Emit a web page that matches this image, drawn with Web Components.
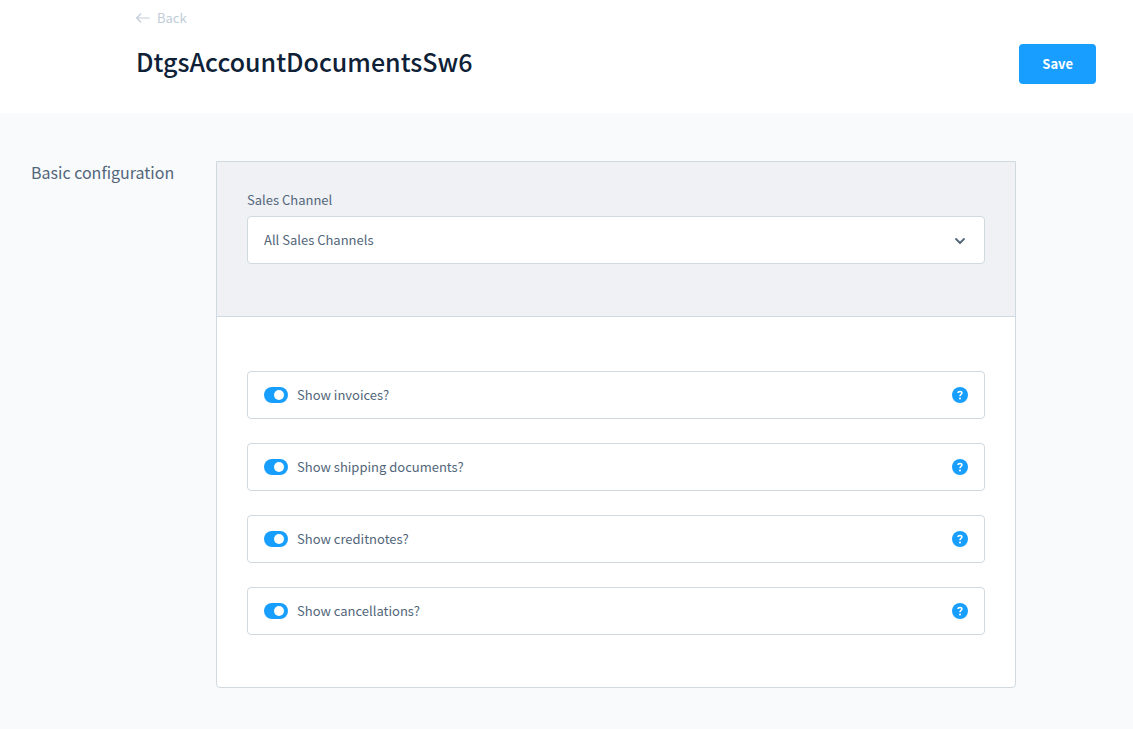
<!DOCTYPE html>
<html lang="en">
<head>
<meta charset="utf-8">
<meta name="viewport" content="width=device-width, initial-scale=1">
<title>DtgsAccountDocumentsSw6</title>
<style>
  html { height: 100%; }
  body {
    margin: 0;
    min-height: 100%;
    background: #f9fafc;
    color: #52667a;
    font-family: "Source Sans Pro", "Noto Sans CJK SC", "Noto Sans", sans-serif;
    font-size: 13px;
    line-height: 20px;
    --accent: #189eff;
    --line: #d1d9e0;
    --title: #0e2137;
    --muted: #c1ccd8;
  }
</style>
</head>
<body>
<config-page></config-page>

<script>
class BaseElement extends HTMLElement {
  constructor() {
    super();
    this.attachShadow({ mode: "open" });
  }
  connectedCallback() {
    if (!this.shadowRoot.firstChild) this.shadowRoot.innerHTML = this.render();
  }
}

class BackLink extends BaseElement {
  render() {
    return `
      <style>
        :host { display: block; }
        a { display: inline-flex; align-items: center; gap: 7px; color: var(--muted); text-decoration: none; }
        svg { display: block; }
      </style>
      <a href="#back">
        <svg width="14" height="12" viewBox="0 0 14 12" fill="none" stroke="currentColor" stroke-width="1.2" stroke-linecap="round" stroke-linejoin="round" aria-hidden="true"><path d="M13.300 6H.7M4.700 2 .7 6l4 4"/></svg>
        <slot></slot>
      </a>`;
  }
}

class PrimaryButton extends BaseElement {
  render() {
    return `
      <style>
        :host { display: block; }
        button {
          display: block; height: 40px; padding: 0 23px; border: 0; border-radius: 4px;
          background: var(--accent); color: #fff; font: inherit; font-weight: 700; cursor: pointer;
        }
      </style>
      <button type="button"><slot></slot></button>`;
  }
}

class PageHeader extends BaseElement {
  render() {
    return `
      <style>
        :host { display: block; background: #fff; }
        header { display: flex; justify-content: space-between; padding: 8px 37px 29px 136px; }
        h1 { margin: 16px 0 0; color: var(--title); font-size: 25px; line-height: 32px; font-weight: 500; }
        .actions { padding-top: 36px; }
      </style>
      <header>
        <div>
          <slot name="back"></slot>
          <h1><slot></slot></h1>
        </div>
        <div class="actions"><slot name="actions"></slot></div>
      </header>`;
  }
}

class SelectField extends BaseElement {
  render() {
    return `
      <style>
        :host { display: block; }
        label { display: block; margin-bottom: 6px; }
        .box { display: grid; align-items: center; }
        .box > * { grid-area: 1 / 1; }
        select {
          appearance: none; width: 100%; height: 48px; margin: 0; padding: 0 40px 0 16px;
          border: 1px solid var(--line); border-radius: 4px; background: #fff; color: inherit; font: inherit;
        }
        svg { justify-self: end; margin-right: 19px; pointer-events: none; }
      </style>
      <label for="field">${this.getAttribute("label")}</label>
      <div class="box">
        <select id="field"><option>${this.getAttribute("value")}</option></select>
        <svg width="12" height="12" viewBox="0 0 12 12" fill="none" stroke="currentColor" stroke-width="1.8" stroke-linecap="round" stroke-linejoin="round" aria-hidden="true"><path d="m2 5 4 4 4-4"/></svg>
      </div>`;
  }
}

class SwitchField extends BaseElement {
  render() {
    return `
      <style>
        :host {
          display: flex; align-items: center; box-sizing: border-box; height: 48px; padding: 0 16px;
          border: 1px solid var(--line); border-radius: 4px; background: #fff;
        }
        input {
          appearance: none; display: flex; align-items: center; box-sizing: border-box; flex: none;
          width: 24px; height: 16px; margin: 0 9px 0 0; padding: 0 4px; border-radius: 8px; background: var(--line);
        }
        input::before { content: ""; width: 10px; height: 10px; border-radius: 50%; background: #fff; }
        input:checked { justify-content: flex-end; background: var(--accent); }
        label { flex: 1; }
        button { display: block; padding: 0; border: 0; background: none; }
        svg { display: block; }
      </style>
      <input id="toggle" type="checkbox" role="switch" checked>
      <label for="toggle"><slot></slot></label>
      <button type="button" aria-label="Help">
        <svg width="16" height="16" viewBox="0 0 16 16" fill="none" aria-hidden="true">
          <circle cx="8" cy="8" r="8" fill="#189eff"/>
          <path d="M6.100 6C6.100 4.900 7 4.500 8 4.500s1.900.5 1.900 1.500C9.900 7.200 8 7.400 8 9.200" stroke="#fff" stroke-width="1.6"/>
          <circle cx="8" cy="11.400" r="1" fill="#fff"/>
        </svg>
      </button>`;
  }
}

class ConfigCard extends BaseElement {
  render() {
    return `
      <style>
        :host { display: block; border: 1px solid var(--line); border-radius: 0 0 4px 4px; background: #fff; }
        .top { padding: 28px 30px 52px; border-bottom: 1px solid var(--line); background: #f0f1f5; }
        .fields { display: grid; gap: 24px; padding: 54px 30px 52px; }
      </style>
      <div class="top"><slot name="top"></slot></div>
      <div class="fields"><slot></slot></div>`;
  }
}

class ConfigPage extends BaseElement {
  render() {
    return `
      <style>
        :host { display: block; }
        main {
          display: grid; grid-template-columns: 145px minmax(0, 800px); column-gap: 40px;
          align-items: start; padding: 48px 31px 41px;
        }
        h2 { margin: 0; font-size: 16px; line-height: 22px; font-weight: 400; white-space: nowrap; }
      </style>
      <page-header>
        <back-link slot="back">Back</back-link>
        DtgsAccountDocumentsSw6
        <primary-button slot="actions">Save</primary-button>
      </page-header>
      <main>
        <h2>Basic configuration</h2>
        <config-card>
          <select-field slot="top" label="Sales Channel" value="All Sales Channels"></select-field>
          <switch-field>Show invoices?</switch-field>
          <switch-field>Show shipping documents?</switch-field>
          <switch-field>Show creditnotes?</switch-field>
          <switch-field>Show cancellations?</switch-field>
        </config-card>
      </main>`;
  }
}

customElements.define("back-link", BackLink);
customElements.define("primary-button", PrimaryButton);
customElements.define("page-header", PageHeader);
customElements.define("select-field", SelectField);
customElements.define("switch-field", SwitchField);
customElements.define("config-card", ConfigCard);
customElements.define("config-page", ConfigPage);
</script>
</body>
</html>
